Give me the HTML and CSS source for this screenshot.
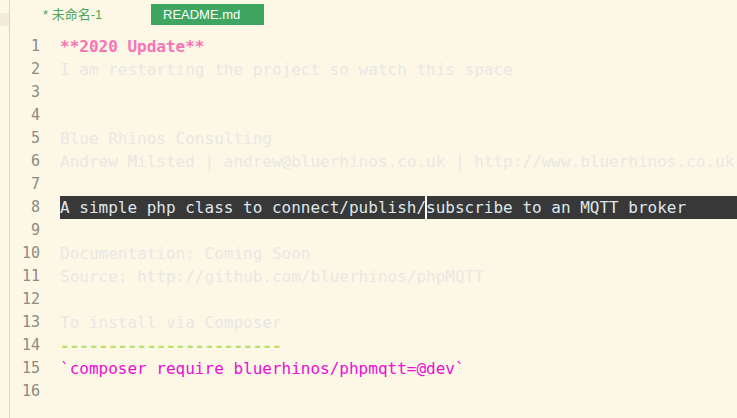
FILE: index.html
```html
<!DOCTYPE html>
<html lang="en">
<head>
    <meta charset="UTF-8">
    <title>README.md</title>
    <link rel="stylesheet" href="styles.css">
</head>
<body>
    <div class="window">
        <div class="side">
            <div class="side-mark"></div>
        </div>
        <div class="main">
            <div class="tabs">
                <span class="tab tab-unsaved">* 未命名-1</span>
                <span class="tab tab-active">README.md</span>
            </div>
            <div class="editor">
                <div class="gutter">
                    <div>1</div><div>2</div><div>3</div><div>4</div>
                    <div>5</div><div>6</div><div>7</div><div>8</div>
                    <div>9</div><div>10</div><div>11</div><div>12</div>
                    <div>13</div><div>14</div><div>15</div><div>16</div>
                </div>
                <div class="code">
                    <div class="line bold">**2020 Update**</div>
                    <div class="line">I am restarting the project so watch this space</div>
                    <div class="line"></div>
                    <div class="line"></div>
                    <div class="line">Blue Rhinos Consulting</div>
                    <div class="line">Andrew Milsted | andrew@bluerhinos.co.uk | http://www.bluerhinos.co.uk</div>
                    <div class="line"></div>
                    <div class="line current">A simple php class to connect/publish/<span class="caret"></span>subscribe to an MQTT broker</div>
                    <div class="line"></div>
                    <div class="line">Documentation: Coming Soon</div>
                    <div class="line">Source: http://github.com/bluerhinos/phpMQTT</div>
                    <div class="line"></div>
                    <div class="line">To install via Composer</div>
                    <div class="line rule">-----------------------</div>
                    <div class="line inline-code">`composer require bluerhinos/phpmqtt=@dev`</div>
                    <div class="line"></div>
                </div>
            </div>
        </div>
    </div>
</body>
</html>
```

FILE: styles.css
```css
html, body {
    margin: 0;
    padding: 0;
    height: 100%;
    overflow: hidden;
    background: #fdf7e5;
}
.window {
    display: flex;
    height: 418px;
}
.side {
    width: 9px;
    border-right: 1px solid #e2d6b4;
    padding-top: 13px;
}
.side-mark {
    height: 13px;
    background: #f3ecd9;
}
.main {
    flex: 1;
    min-width: 0;
}
.tabs {
    display: flex;
    align-items: center;
    height: 22px;
    padding-top: 3px;
    padding-left: 33px;
    font-family: "Liberation Sans", Arial, sans-serif;
    font-size: 13px;
}
.tab {
    height: 21px;
    line-height: 21px;
}
.tab-unsaved {
    color: #4fa55c;
    width: 108px;
    font-family: "Liberation Sans", "Noto Sans CJK SC", sans-serif;
}
.tab-active {
    background: #3ea661;
    color: #fff;
    width: 101px;
    padding-left: 12px;
}
.editor {
    display: flex;
    margin-top: 10px;
    font-family: "DejaVu Sans Mono", monospace;
    font-size: 16px;
    line-height: 23px;
}
.gutter {
    width: 30px;
    text-align: right;
    color: #8e8a84;
    font-size: 15px;
    flex-shrink: 0;
}
.code {
    flex: 1;
    min-width: 0;
    padding-left: 20px;
    color: #e8e8e6;
}
.line {
    height: 23px;
    white-space: pre;
}
.bold {
    color: #f874b6;
    font-weight: bold;
}
.current {
    background: #383838;
    color: #dfe6ec;
}
.caret {
    display: inline-block;
    width: 2px;
    height: 23px;
    margin-left: -1px;
    margin-right: -1px;
    background: #fff;
    vertical-align: top;
}
.rule {
    color: #b8e067;
    font-weight: bold;
}
.inline-code {
    color: #ea0fd6;
}
```
